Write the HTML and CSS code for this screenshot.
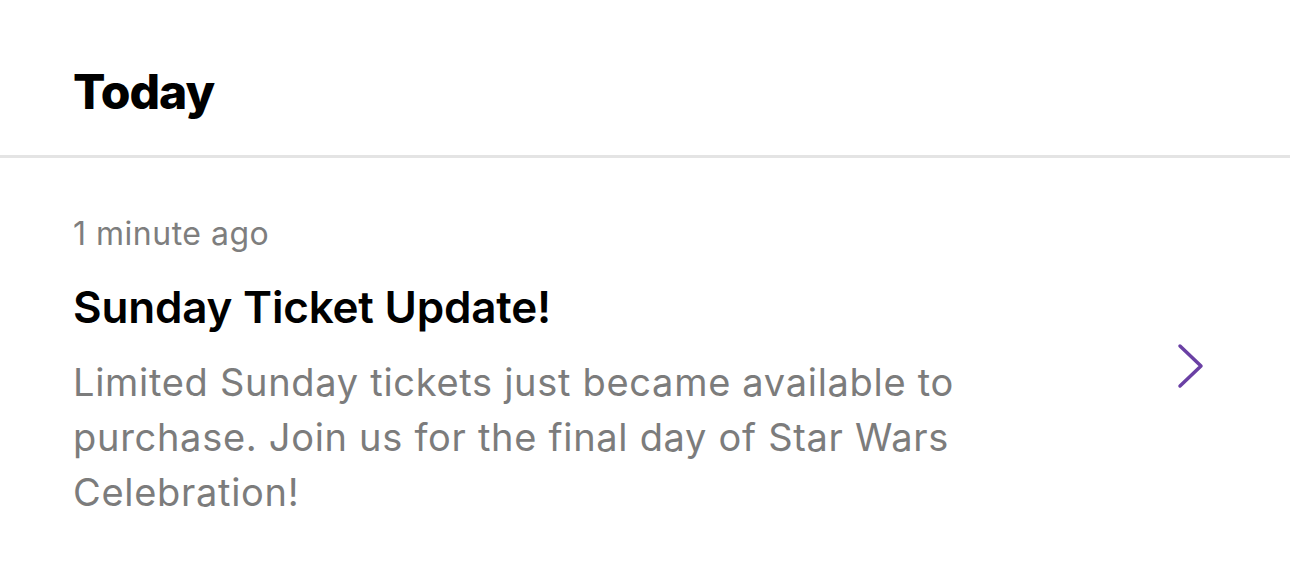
FILE: index.html
```html
<!DOCTYPE html>
<html>
<head>
<meta charset="utf-8">
<link rel="stylesheet" href="styles.css">
</head>
<body>
<div class="page">
  <header class="section-head">
    <h1 class="section-title">Today</h1>
  </header>
  <div class="notice">
    <div class="notice-text">
      <div class="notice-time">1 minute ago</div>
      <div class="notice-title">Sunday Ticket Update!</div>
      <div class="notice-body">Limited Sunday tickets just became available to purchase. Join us for the final day of Star Wars Celebration!</div>
    </div>
    <svg class="chevron" width="30" height="46" viewBox="0 0 30 46"><path d="M4 3 L25 23 L4 43" fill="none" stroke="#6a40a4" stroke-width="3.5" stroke-linecap="round" stroke-linejoin="round"/></svg>
  </div>
</div>
</body>
</html>
```

FILE: styles.css
```css
html, body { margin: 0; padding: 0; background: #fff; }
body { font-family: "Inter", "Noto Sans", sans-serif; }
.page { width: 1290px; height: 577px; overflow: hidden; }
.section-head {
  height: 155px;
  border-bottom: 3px solid #e4e4e4;
  padding-left: 73px;
}
.section-title {
  margin: 0;
  padding-top: 62px;
  font-size: 48px;
  line-height: 60px;
  font-weight: 800;
  color: #000;
  letter-spacing: -1px;
}
.notice {
  display: flex;
  align-items: center;
  padding: 53px 84px 0 73px;
}
.notice-text { flex: 1; }
.notice-time {
  font-size: 32px;
  line-height: 46px;
  color: #7e7e7e;
  font-weight: 400;
  letter-spacing: 0.5px;
}
.notice-title {
  margin-top: 23px;
  font-size: 44px;
  line-height: 54px;
  font-weight: 600;
  color: #000;
  letter-spacing: -0.2px;
}
.notice-body {
  margin-top: 21px;
  font-size: 38px;
  line-height: 55px;
  color: #7c7c7c;
  letter-spacing: 0.7px;
  width: 960px;
}
.chevron { flex: none; }
```
